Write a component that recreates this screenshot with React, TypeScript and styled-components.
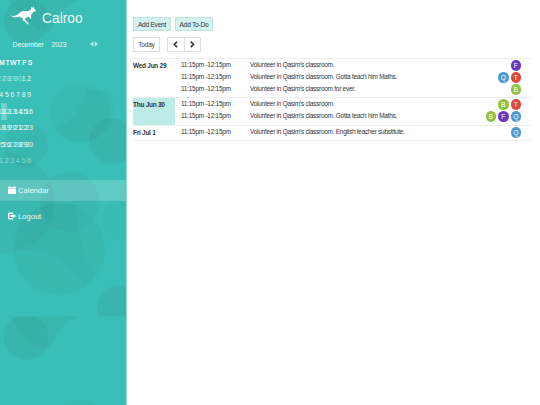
import styled, { createGlobalStyle } from "styled-components";
import { FaChevronLeft, FaChevronRight } from "react-icons/fa";

const GlobalStyle = createGlobalStyle`
  * {
    box-sizing: border-box;
  }
  body {
    margin: 0;
    background-color: #fff;
    color: #333;
    font-family: "Liberation Sans", Arial, sans-serif;
    font-size: 6.5px;
    overflow: hidden;
  }
  button {
    font-family: inherit;
    padding: 0;
  }
`;

const Wrapper = styled.div`
  display: grid;
  grid-template-columns: 127px 1fr;
  height: 405px;
`;

const Sidebar = styled.aside`
  position: relative;
  overflow: hidden;
  background-color: #39bfb7;
  border-right: 1px solid #8edbd6;
  color: #e9fbf9;
`;

const Pattern = styled.svg`
  position: absolute;
  top: 0;
  left: 0;
`;

const SidebarContent = styled.div`
  position: relative;
`;

const Brand = styled.div`
  display: flex;
  height: 36px;
  padding: 6px 0 0 10px;
  font-size: 13.8px;
  line-height: 25px;
`;

const BrandName = styled.span`
  margin-left: 6px;
`;

const MonthBar = styled.div`
  display: flex;
  align-items: center;
  height: 16px;
  padding-left: 12.5px;
  font-size: 6.8px;
`;

const Month = styled.span`
  width: 39px;
`;

const Year = styled.span`
  width: 38px;
`;

const MonthGrid = styled.div`
  display: grid;
  grid-template-columns: repeat(7, 5.6px);
  grid-auto-rows: 16.4px;
  margin-left: -7.2px;
  padding-top: 2px;
`;

const WeekDay = styled.span`
  display: flex;
  align-items: center;
  justify-content: center;
  padding-left: 1.5px;
  font-size: 6.9px;
  font-weight: bold;
`;

const Day = styled.span<{ $muted?: boolean; $today?: boolean }>`
  position: relative;
  display: flex;
  align-items: center;
  justify-content: center;
  font-size: 6.8px;
  opacity: ${({ $muted }) => ($muted ? 0.55 : 1)};
  &::before {
    content: "";
    display: ${({ $today }) => ($today ? "block" : "none")};
    position: absolute;
    top: 0;
    left: -3px;
    width: 6px;
    height: 17px;
    background-color: rgba(255, 255, 255, 0.28);
  }
`;

const Nav = styled.nav`
  padding-top: 11px;
`;

const NavItem = styled.a<{ $active?: boolean }>`
  display: flex;
  align-items: center;
  height: 21px;
  margin-bottom: 5px;
  padding-left: 8px;
  gap: 2px;
  font-size: 7.6px;
  background-color: ${({ $active }) => ($active ? "rgba(255, 255, 255, 0.2)" : "transparent")};
`;

const Main = styled.main`
  padding: 17px 10px 0 6px;
  letter-spacing: -0.27px;
`;

const Toolbar = styled.div`
  display: flex;
  gap: 4px;
  margin-bottom: 6px;
`;

const ActionButton = styled.button<{ $width: number }>`
  width: ${({ $width }) => $width}px;
  height: 14px;
  border: 1px solid #bde2df;
  border-radius: 1px;
  background-color: #d5f1ef;
  color: #333;
  font-size: 6.6px;
  letter-spacing: -0.25px;
`;

const TodayButton = styled.button`
  width: 27px;
  height: 15px;
  margin-right: 3px;
  border: 1px solid #ddd;
  background-color: #fff;
  color: #444;
  font-size: 6.6px;
  letter-spacing: -0.25px;
`;

const Pager = styled.div`
  display: flex;
  width: 34px;
  height: 15px;
  border: 1px solid #ddd;
`;

const PagerButton = styled.button`
  display: flex;
  flex: 1;
  align-items: center;
  justify-content: center;
  border: 0;
  background-color: #fff;
  color: #222;
  font-size: 6.8px;
  & + & {
    border-left: 1px solid #ddd;
  }
  svg {
    stroke: currentColor;
    stroke-width: 40px;
  }
`;

const Agenda = styled.div`
  margin-top: 6px;
`;

const DayRow = styled.section<{ $height: number }>`
  display: grid;
  grid-template-columns: 42px 1fr;
  height: ${({ $height }) => $height}px;
  border-top: 1px solid #eee;
  &:last-child {
    border-bottom: 1px solid #eee;
  }
`;

const DayLabel = styled.div<{ $active?: boolean }>`
  padding-top: 3px;
  font-weight: bold;
  line-height: 8px;
  background-color: ${({ $active }) => ($active ? "#bdebe7" : "transparent")};
`;

const Events = styled.div`
  padding-top: 0.4px;
`;

const EventRow = styled.div`
  display: grid;
  grid-template-columns: 69px 1fr 60px;
  height: 12px;
  padding: 0 9px 0 6px;
  line-height: 12px;
`;

const People = styled.div`
  display: flex;
  justify-content: flex-end;
  gap: 2px;
  padding-top: 1px;
`;

const Badge = styled.span<{ $color: string }>`
  width: 10.5px;
  height: 10.5px;
  border-radius: 50%;
  background-color: ${({ $color }) => $color};
  color: #fff;
  font-size: 6.8px;
  line-height: 11px;
  text-align: center;
`;

const badgeColors: Record<string, string> = {
  F: "#6a38b8",
  Q: "#4797d2",
  T: "#e0473f",
  B: "#91c23f",
};

const weekDays = ["S", "M", "T", "W", "T", "F", "S"];

const monthDays = Array.from({ length: 42 }, (_, i) => {
  const n = i - 4;
  if (n < 1) return { day: 30 + n, muted: true };
  // the week rows end on the 30th, the 31st sits in the clipped sunday column
  if (n > 31) return { day: n - 31, muted: true };
  return { day: n, muted: false };
});

const agenda = [
  {
    label: "Wed Jun 29",
    height: 39,
    events: [
      { text: "Volunteer in Qasim's classroom.", people: "F" },
      { text: "Volunteer in Qasim's classroom. Gotta teach him Maths.", people: "QT" },
      { text: "Volunteer in Qasim's classroom for ever.", people: "B" },
    ],
  },
  {
    label: "Thu Jun 30",
    height: 28,
    active: true,
    events: [
      { text: "Volunteer in Qasim's classroom.", people: "BT" },
      { text: "Volunteer in Qasim's classroom. Gotta teach him Maths.", people: "BFQ" },
    ],
  },
  {
    label: "Fri Jul 1",
    height: 16,
    events: [{ text: "Volunteer in Qasim's classroom. English teacher substitute.", people: "Q" }],
  },
];

const Kangaroo = () => (
  <svg width="26" height="19" viewBox="0 0 26 19" fill="#fff">
    <path d="M0 9.500C4 10.500 7 9.500 9 7.500C11 5 14 4.800 16.500 5.200C19 5.200 20.500 4 21.300 2.800L21.500 .6L22.800 2L23.800 .3L24 2.500L26 4.800L25.300 5.800L23 5.800C22.500 7.500 21.800 8.500 21 9.300L21.300 12L19.800 13.300L20 11.800L18.500 10.500L16.800 11.500L14.500 13.300L17.300 15.800L19 18.500L17.800 18.300L15.500 16L12.300 13.800L13.500 11.700L11 12L10 10.500C6.500 11.800 3 11.500 0 9.500Z" />
  </svg>
);

const Bubbles = () => (
  <Pattern width="127" height="405">
    <defs>
      <pattern id="bubbles" width="127" height="316.500" patternUnits="userSpaceOnUse">
        <g fill="#2e807a" fillOpacity="0.15">
          <circle cx="26" cy="21" r="22.500" />
          <path d="M9 0H78Q57 9 50 34Q25 27 9 0Z" fillOpacity="0.13" />
          <circle cx="80" cy="113" r="30" fillOpacity="0.07" />
          <path d="M87 88Q98 92 108 90A30 30 0 0 1 54 128Q82 118 87 88Z" fillOpacity="0.09" />
          <circle cx="112" cy="141" r="23" />
          <circle cx="26" cy="145" r="22" fillOpacity="0.11" />
          <circle cx="70" cy="202" r="30" fillOpacity="0.11" />
          <circle cx="5" cy="203" r="50" fillOpacity="0.11" />
          <circle cx="59" cy="249" r="46" fillOpacity="0.09" />
          <path d="M24 220A46 46 0 0 1 76 206Q79 256 96 275L85 286Q60 248 15 250Q15 232 24 220Z" fillOpacity="0.07" />
          <circle cx="126" cy="218" r="24" fillOpacity="0.06" />
          <circle cx="120" cy="308" r="23" />
        </g>
      </pattern>
    </defs>
    <rect width="127" height="405" fill="url(#bubbles)" />
  </Pattern>
);

const MonthArrows = () => (
  <svg width="8" height="6" viewBox="0 0 8 6" fill="#fff" fillOpacity="0.65">
    <path d="M3.500 .3V5.700L0 3ZM4.800 .3V5.700L8 3Z" />
  </svg>
);

const CalendarIcon = () => (
  <svg width="8" height="8" viewBox="0 0 8 8" fill="#fff">
    <path d="M0 1H1V0H2V1H6V0H7V1H8V2.300H0ZM0 2.800H8V8H0Z" />
  </svg>
);

const LogoutIcon = () => (
  <svg width="8" height="8" viewBox="0 0 8 8" fill="#fff">
    <path d="M5 .5H1.500Q0 .5 0 2V6Q0 7.500 1.500 7.500H5V6H1.500V2H5Z" />
    <path d="M5 1.700L8 4L5 6.300V5H2.700V3H5Z" />
  </svg>
);

const App = () => {
  return (
    <Wrapper>
      <GlobalStyle />
      <Sidebar>
        <Bubbles />
        <SidebarContent>
          <Brand>
            <Kangaroo />
            <BrandName>Calroo</BrandName>
          </Brand>
          <MonthBar>
            <Month>December</Month>
            <Year>2023</Year>
            <MonthArrows />
          </MonthBar>
          <MonthGrid>
            {weekDays.map((name, i) => (
              <WeekDay key={i}>{name}</WeekDay>
            ))}
            {monthDays.map(({ day, muted }, i) => (
              <Day key={i} $muted={muted} $today={day === 12}>
                {day}
              </Day>
            ))}
          </MonthGrid>
          <Nav>
            <NavItem $active>
              <CalendarIcon />
              Calendar
            </NavItem>
            <NavItem>
              <LogoutIcon />
              Logout
            </NavItem>
          </Nav>
        </SidebarContent>
      </Sidebar>
      <Main>
        <Toolbar>
          <ActionButton $width={38}>Add Event</ActionButton>
          <ActionButton $width={38}>Add To-Do</ActionButton>
        </Toolbar>
        <Toolbar>
          <TodayButton>Today</TodayButton>
          <Pager>
            <PagerButton>
              <FaChevronLeft />
            </PagerButton>
            <PagerButton>
              <FaChevronRight />
            </PagerButton>
          </Pager>
        </Toolbar>
        <Agenda>
          {agenda.map(({ label, height, active, events }) => (
            <DayRow key={label} $height={height}>
              <DayLabel $active={active}>{label}</DayLabel>
              <Events>
                {events.map(({ text, people }) => (
                  <EventRow key={text}>
                    <span>11:15pm -12:15pm</span>
                    <span>{text}</span>
                    <People>
                      {people.split("").map((person) => (
                        <Badge key={person} $color={badgeColors[person]}>
                          {person}
                        </Badge>
                      ))}
                    </People>
                  </EventRow>
                ))}
              </Events>
            </DayRow>
          ))}
        </Agenda>
      </Main>
    </Wrapper>
  );
};

export default App;
